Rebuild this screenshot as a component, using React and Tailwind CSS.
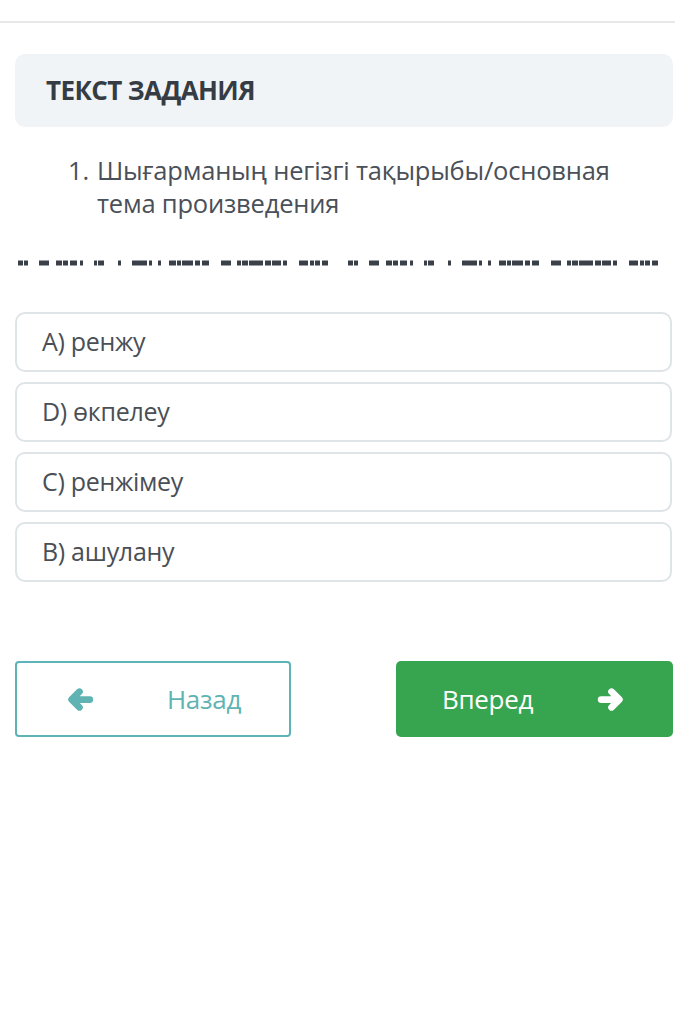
const dashes = [
  [18, 23], [24, 28], [39, 49], [56, 62], [63, 68], [70, 77], [80, 83],
  [94, 97], [98, 104], [118, 121], [132, 147], [149, 152], [158, 161],
  [169, 176], [177, 181], [182, 193], [195, 200], [202, 209], [221, 231],
  [237, 241], [242, 248], [249, 263], [265, 271], [272, 281], [283, 287],
  [299, 308], [310, 314], [315, 320], [322, 328],
];

const options = ["A) ренжу", "D) өкпелеу", "C) ренжімеу", "B) ашулану"];

const Redacted = () => (
  <svg width="675" height="8" viewBox="0 0 675 8" className="block">
    {[0, 330].map((off) =>
      dashes.map(([a, b]) => (
        <rect key={`${off}-${a}`} x={a + off} y="1.5" width={b - a} height="5" fill="#3a4048" />
      ))
    )}
  </svg>
);

const Arrow = ({ dir = "left", className }) => (
  <svg viewBox="0 0 26 24" className={className} fill="none" stroke="currentColor" strokeWidth="6.5" strokeLinecap="round" strokeLinejoin="round">
    {dir === "left" ? (
      <path d="M22 12H5M12 4.5L4.5 12L12 19.5" />
    ) : (
      <path d="M4 12H21M14 4.5L21.5 12L14 19.5" />
    )}
  </svg>
);

export default function App() {
  return (
    <div className="w-[675px] h-[1028px] bg-white font-['Open_Sans',sans-serif]">
      <div className="h-[23px] border-b-2 border-[#e6e8ea]" />

      <div className="ml-[15px] mr-[2px] mt-[31px] h-[73px] rounded-[10px] bg-[#f1f4f6] flex items-center pl-[31px]">
        <h2 className="text-[26px] font-bold text-[#363c44] tracking-[-0.6px]">ТЕКСТ ЗАДАНИЯ</h2>
      </div>

      <div className="mt-[27px] flex pl-[68px] pr-[40px] text-[25.5px] leading-[33px] text-[#4a5058] tracking-[-0.2px]">
        <span className="w-[29px] shrink-0">1.</span>
        <p>Шығарманың негізгі тақырыбы/основная тема произведения</p>
      </div>

      <div className="mt-[39px]">
        <Redacted />
      </div>

      <div className="mt-[45px] ml-[15px] mr-[3px] flex flex-col gap-[10px]">
        {options.map((o) => (
          <div
            key={o}
            className="h-[60px] rounded-[10px] border-2 border-[#dfe4e7] flex items-center pl-[25px] text-[25px] text-[#4a4f56] tracking-[-0.3px]"
          >
            {o}
          </div>
        ))}
      </div>

      <div className="mt-[79px] ml-[15px] mr-[2px] flex justify-between">
        <button className="w-[276px] h-[76px] rounded-[4px] border-2 border-[#5db3b6] flex items-center pl-[50px] text-[#5fb3b3]">
          <Arrow dir="left" className="w-[27px] h-[25px]" />
          <span className="ml-[73px] text-[26px] tracking-[-0.3px]">Назад</span>
        </button>
        <button className="w-[277px] h-[76px] rounded-[5px] bg-[#37a450] flex items-center pl-[46px] text-white">
          <span className="text-[26px] tracking-[-0.3px]">Вперед</span>
          <Arrow dir="right" className="ml-[64px] w-[27px] h-[25px]" />
        </button>
      </div>
    </div>
  );
}
